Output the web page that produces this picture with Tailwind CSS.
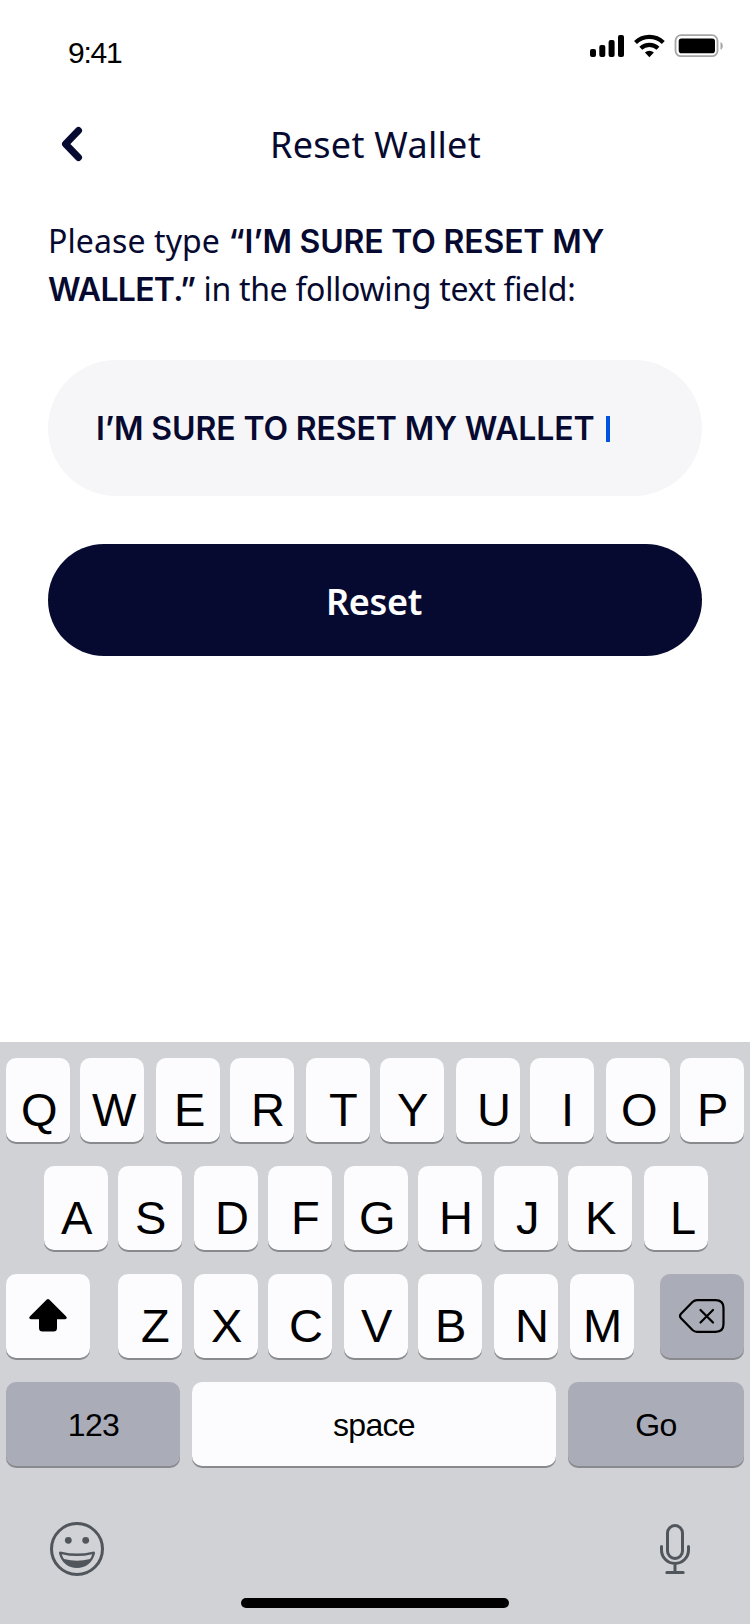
<!DOCTYPE html>
<html lang="en">
<head>
<meta charset="utf-8">
<title>Reset Wallet</title>
<script src="https://cdn.jsdelivr.net/npm/@tailwindcss/browser@4"></script>
</head>
<body class="bg-white">
<div class="flex h-[1624px] w-[750px] flex-col overflow-hidden bg-white font-['Noto_Sans',sans-serif] text-[#070a30]">
  <header class="flex h-[88px] items-start justify-between pl-[68px] pr-[27px] text-black">
    <span class="mt-[35px] font-['Liberation_Sans',sans-serif] text-[30px] leading-[36px] tracking-[-1.2px]">9:41</span>
    <svg class="mt-[33px]" width="134" height="26" viewBox="589 33 134 26">
      <rect x="590" y="49" width="6" height="8" rx="2"/><rect x="599.300" y="45" width="6" height="12" rx="2"/><rect x="608.600" y="40" width="6" height="17" rx="2"/><rect x="618" y="35" width="6" height="22" rx="2"/>
      <g fill="none" stroke="#000" stroke-width="4.200"><path d="M635.500 42.500a20.200 20.200 0 0 1 27.800 0"/><path d="M640.800 48.300a12.400 12.400 0 0 1 17.200 0"/></g>
      <path d="M644.900 52.500a6.600 6.600 0 0 1 9 0l-4.500 4.700z"/>
      <rect x="675.500" y="35.200" width="42" height="21" rx="5.500" fill="none" stroke="#a6a6a6" stroke-width="1.800"/>
      <rect x="678.700" y="38.600" width="36.300" height="14.600" rx="2.800"/>
      <path d="M720.500 42c3 1.200 3 6.600 0 7.800z" fill="#a6a6a6"/>
    </svg>
  </header>
  <nav class="grid h-[112px] grid-cols-[1fr_auto_1fr] items-start px-12">
    <svg class="ml-3 mt-[37px]" width="24" height="38" viewBox="0 0 24 38" fill="none" stroke="#070a30" stroke-width="7" stroke-linecap="round" stroke-linejoin="round"><path d="M18.500 5.500 5.500 19 18.500 32.500"/></svg>
    <h1 class="mt-[33px] whitespace-nowrap pl-px text-[36px] leading-[48px] tracking-[0.3px]">Reset Wallet</h1>
  </nav>
  <main class="flex h-[842px] flex-col px-12 pt-[17px]">
    <p class="h-24 whitespace-nowrap text-[32px] leading-[48px]"><span class="tracking-[0.100px]">Please type </span><b class="font-['Inter',sans-serif] font-semibold leading-none tracking-[-0.180px]">“I’M SURE TO RESET MY</b><br><b class="font-['Inter',sans-serif] font-semibold leading-none tracking-[-0.700px]">WALLET.”</b><span class="tracking-[-0.300px]"> in the following text field:</span></p>
    <div class="mt-[47px] flex h-[136px] items-center rounded-[68px] bg-[#f6f6f9] px-12 pt-0.5">
      <span class="w-[510px] whitespace-nowrap font-['Inter',sans-serif] text-[32px] font-semibold leading-[48px] tracking-[-0.120px]">I’M SURE TO RESET MY WALLET</span>
      <i class="h-[26px] w-1 bg-[#0052e0]"></i>
    </div>
    <button class="mt-12 h-28 rounded-[56px] bg-[#070a30] pr-0.5 pt-[3px] text-[36px] font-semibold leading-[48px] tracking-[-0.300px] text-white">Reset</button>
  </main>
  <section class="flex h-[582px] flex-col bg-[#d1d2d6] px-1.5 pt-4 font-['Liberation_Sans',sans-serif] text-black">
    <div class="flex flex-col gap-6 text-[47px] leading-[52px] *:flex *:h-[84px] *:gap-3 [&_b]:block [&_b]:h-[84px] [&_b]:w-16 [&_b]:rounded-[10px] [&_b]:bg-[#fcfcfe] [&_b]:pt-[26px] [&_b]:font-normal [&_b]:shadow-[0_2px_0_#898a8d]">
      <div>
        <div class="flex gap-2.5"><b class="pl-[15px]">Q</b><b class="pl-[12px]">W</b></div>
        <div class="flex gap-2.5"><b class="pl-[18px]">E</b><b class="pl-[21px]">R</b></div>
        <div class="flex gap-2.5"><b class="pl-[23px]">T</b><b class="pl-[17px]">Y</b></div>
        <div class="flex gap-2.5"><b class="pl-[21px]">U</b><b class="pl-[31px]">I</b></div>
        <div class="flex gap-2.5"><b class="pl-[15px]">O</b><b class="pl-[17px]">P</b></div>
      </div>
      <div class="pl-[38px]">
        <div class="flex gap-2.5"><b class="pl-[17px]">A</b><b class="pl-[17px]">S</b></div>
        <div class="flex gap-2.5"><b class="pl-[21px]">D</b><b class="pl-[23px]">F</b></div>
        <div class="flex gap-2.5"><b class="pl-[15px]">G</b><b class="pl-[21px]">H</b></div>
        <div class="flex gap-2.5"><b class="pl-[22px]">J</b><b class="pl-[17px]">K</b></div>
        <b class="pl-[26px]">L</b>
      </div>
      <div>
        <div class="mr-4 flex w-[84px] items-center justify-center rounded-[10px] bg-[#fcfcfe] shadow-[0_2px_0_#898a8d]">
          <svg class="mb-[2px]" width="40" height="36" viewBox="0 0 40 36"><path d="M18.800 2.600q1.200-1.100 2.400 0L38.200 19.500q1.500 2.200-1 2.700H29V31q0 3.600-3.500 3.600h-11Q11 34.600 11 31V22.200H2.800q-2.500-.5-1-2.700z"/></svg>
        </div>
        <b class="pl-[23px]">Z</b>
        <div class="flex gap-2.5"><b class="pl-[17px]">X</b><b class="pl-[21px]">C</b></div>
        <div class="flex gap-2.5"><b class="pl-[17px]">V</b><b class="pl-[17px]">B</b></div>
        <b class="pl-[21px]">N</b>
        <b class="pl-[13px]">M</b>
        <div class="ml-3.5 flex w-[84px] items-center justify-center rounded-[10px] bg-[#aaacb8] shadow-[0_2px_0_#898a8d]">
          <svg width="48" height="36" viewBox="0 0 48 36" fill="none" stroke="#000" stroke-width="2.200" stroke-linecap="round" stroke-linejoin="round"><path d="M19 2.200H37.500Q45.500 2.200 45.500 10V26Q45.500 33.800 37.500 33.800H19Q16.500 33.800 14.500 32L3 20.200Q1 18 3 15.800L14.500 4Q16.500 2.200 19 2.200z"/><path d="m22.500 12 12.500 12.500M35 12 22.500 24.500"/></svg>
        </div>
      </div>
      <div class="text-[32px] leading-9 tracking-[-0.700px] *:flex *:justify-center *:rounded-[10px] *:pt-[25px] *:shadow-[0_2px_0_#898a8d]">
        <div class="w-[174px] bg-[#aaacb8] pl-px">123</div>
        <div class="w-[364px] bg-[#fcfcfe]">space</div>
        <div class="w-44 bg-[#aaacb8]">Go</div>
      </div>
    </div>
    <div class="mt-[54px] flex h-[58px] items-center justify-between pl-[42px] pr-[51px]">
      <svg width="58" height="58" viewBox="-29 -29 58 58"><circle r="25.500" fill="none" stroke="#50565c" stroke-width="3"/><circle cx="-8.700" cy="-8.700" r="3.400" fill="#50565c"/><circle cx="8.700" cy="-8.700" r="3.400" fill="#50565c"/><path fill="#50565c" fill-rule="evenodd" d="M-18 4.500Q-18.500 2 -15.500 2.700Q0 6.500 15.500 2.700Q18.500 2 18 4.500C15.500 14 8.500 19 0 19S-15.500 14-18 4.500zM-15.200 5.200Q0 9 15.200 5.200Q14.500 8 13 10Q0 13.500-13 10Q-14.500 8-15.200 5.200z"/></svg>
      <svg width="36" height="58" viewBox="-18 0 36 58" fill="none" stroke="#50565c" stroke-width="3" stroke-linecap="round"><rect x="-7.500" y="5.500" width="15" height="33" rx="7.500"/><path d="M-13.500 26.500V30a13.500 13.500 0 0 0 27 0V26.500M0 44v7.500M-8.200 52.500H8.200"/></svg>
    </div>
    <div class="mt-5 h-2.5 w-[268px] self-center rounded-full bg-black"></div>
  </section>
</div>
</body>
</html>
